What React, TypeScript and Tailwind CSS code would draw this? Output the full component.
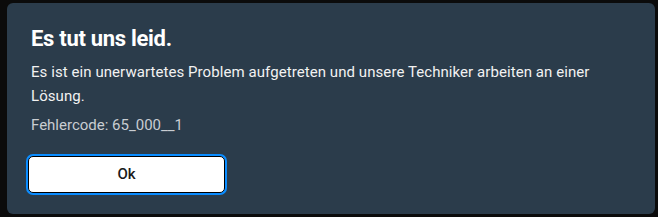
import React from 'react';

const App: React.FC = () => {
  return (
    <div className="min-h-screen w-full bg-[#0b0b0b] pl-[7px] pt-[3px]">
      <div className="w-[648px] h-[211px] rounded-md bg-[#2b3c4b] px-6 pt-[22px] font-['Roboto',sans-serif]">
        <h2 className="text-[22px] leading-[28px] font-bold text-white tracking-[-0.3px]">Es tut uns leid.</h2>
        <p className="mt-[7px] text-[15px] leading-[24px] text-[#f2f2f2] tracking-[0.07px]">
          Es ist ein unerwartetes Problem aufgetreten und unsere Techniker arbeiten an einer Lösung.
        </p>
        <p className="mt-[5px] text-[15px] leading-[24px] text-[#c9cdd2]">Fehlercode: 65_000__1</p>
        <div className="mt-[17px] -ml-[5px]">
          <button
            type="button"
            className="w-[201px] h-[41px] rounded-[7px] bg-[#0a8cff] p-[2px]"
          >
            <span className="flex h-full w-full items-center justify-center rounded-[5px] border border-black bg-white text-[15px] font-medium text-[#1a1a1a]">
              Ok
            </span>
          </button>
        </div>
      </div>
    </div>
  );
};

export default App;
